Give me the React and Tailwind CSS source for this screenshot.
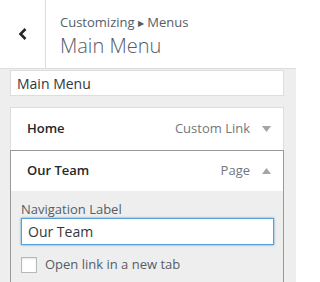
import React from "react";

const font = { fontFamily: '"Open Sans", "Liberation Sans", sans-serif' };

function Arrow({ up }) {
  return (
    <svg width="9" height="6" viewBox="0 0 9 6" className="ml-[12px] mr-[2px]">
      <polygon points={up ? "0,6 9,6 4.5,0" : "0,0 9,0 4.5,6"} fill="#a0a5aa" />
    </svg>
  );
}

export default function App() {
  return (
    <div className="w-[296px] h-[282px] overflow-hidden bg-[#eeeeee] text-[#32373c]" style={font}>
      {/* Header */}
      <div className="flex h-[69px] bg-white border-b border-[#dddddd]">
        <div className="w-[46px] border-r border-[#dddddd] flex items-center justify-center">
          <svg width="10" height="14" viewBox="0 0 10 14">
            <polyline points="7.5,2 2.5,7 7.5,12" fill="none" stroke="#23282d" strokeWidth="2.6" />
          </svg>
        </div>
        <div className="pl-[14px] pt-[13px]">
          <div className="text-[13px] leading-[18px] text-[#555d66]">
            Customizing <span className="text-[8px] align-[1px]">▶</span> Menus
          </div>
          <div className="text-[20px] leading-[26px] font-light text-[#555d66] mt-[1px]">Main Menu</div>
        </div>
      </div>

      {/* Body */}
      <div className="pl-[10px] pr-[12px] pt-[1px]">
        <div className="h-[26px] bg-white border border-[#dddddd] px-[6px] flex items-center text-[14px] text-[#32373c]">
          Main Menu
        </div>

        <div className="mt-[11px]">
          <div className="h-[43px] bg-white border border-[#dddddd] border-b-0 flex items-center pl-[16px] pr-[10px]">
            <span className="text-[13px] font-semibold text-[#23282d]">Home</span>
            <span className="ml-auto text-[13px] text-[#72777c]">Custom Link</span>
            <Arrow />
          </div>
          <div className="border border-[#999999] border-b-0">
            <div className="h-[40px] bg-white flex items-center pl-[16px] pr-[10px]">
              <span className="text-[13px] font-semibold text-[#23282d]">Our Team</span>
              <span className="ml-auto text-[13px] text-[#72777c]">Page</span>
              <Arrow up />
            </div>
            <div className="bg-[#eeeeee] pl-[10px] pr-[9px] pt-[9px] pb-[10px]">
              <div className="text-[13px] leading-[18px] text-[#555d66]">Navigation Label</div>
              <div className="mt-0 h-[27px] bg-white border border-[#5b9dd9] shadow-[0_0_2px_rgba(30,140,190,0.8)] px-[6px] flex items-center text-[14px] text-[#32373c]">
                Our Team
              </div>
              <label className="mt-[10px] flex items-center">
                <span className="w-[16px] h-[16px] bg-white border border-[#b4b9be] shadow-[inset_0_1px_2px_rgba(0,0,0,0.1)]" />
                <span className="ml-[8px] text-[13px] text-[#555d66]">Open link in a new tab</span>
              </label>
            </div>
          </div>
        </div>
      </div>
    </div>
  );
}
